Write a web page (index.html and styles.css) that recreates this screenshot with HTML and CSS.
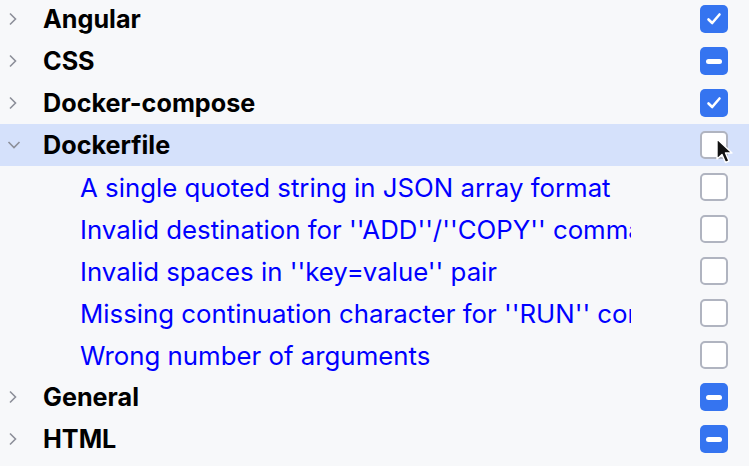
FILE: index.html
```html
<!DOCTYPE html>
<html lang="en">
<head>
  <meta charset="UTF-8">
  <title>Inspections</title>
  <link rel="stylesheet" href="styles.css">
</head>
<body>
  <div class="tree">
    <div class="row group">
      <span class="arrow"><svg width="12" height="14" viewBox="0 0 12 14"><path d="M3 1.5 L8.5 7 L3 12.5" fill="none" stroke="#8c8f99" stroke-width="1.6"/></svg></span>
      <span class="label">Angular</span>
      <span class="box checked"><svg width="18" height="18" viewBox="0 0 18 18"><path d="M3.5 9.5 L7.2 13 L14.5 4.5" fill="none" stroke="#fff" stroke-width="2.6" stroke-linecap="round" stroke-linejoin="round"/></svg></span>
    </div>
    <div class="row group">
      <span class="arrow"><svg width="12" height="14" viewBox="0 0 12 14"><path d="M3 1.5 L8.5 7 L3 12.5" fill="none" stroke="#8c8f99" stroke-width="1.6"/></svg></span>
      <span class="label">CSS</span>
      <span class="box mixed"><i class="dash"></i></span>
    </div>
    <div class="row group">
      <span class="arrow"><svg width="12" height="14" viewBox="0 0 12 14"><path d="M3 1.5 L8.5 7 L3 12.5" fill="none" stroke="#8c8f99" stroke-width="1.6"/></svg></span>
      <span class="label">Docker-compose</span>
      <span class="box checked"><svg width="18" height="18" viewBox="0 0 18 18"><path d="M3.5 9.5 L7.2 13 L14.5 4.5" fill="none" stroke="#fff" stroke-width="2.6" stroke-linecap="round" stroke-linejoin="round"/></svg></span>
    </div>
    <div class="row group hover">
      <span class="arrow"><svg width="14" height="12" viewBox="0 0 14 12"><path d="M1.5 3 L7 8.5 L12.5 3" fill="none" stroke="#8c8f99" stroke-width="1.6"/></svg></span>
      <span class="label">Dockerfile</span>
      <span class="box"></span>
      <svg class="cursor" width="22" height="30" viewBox="0 0 22 30"><path d="M2 2 L2 22 L7 17.5 L10.5 25.5 L14 24 L10.5 16 L17 16 Z" fill="#111" stroke="#fff" stroke-width="1.4" stroke-linejoin="round"/></svg>
    </div>
    <div class="row item">
      <span class="label">A single quoted string in JSON array format</span>
      <span class="box"></span>
    </div>
    <div class="row item">
      <span class="label">Invalid destination for ''ADD''/''COPY'' commands</span>
      <span class="box"></span>
    </div>
    <div class="row item">
      <span class="label">Invalid spaces in ''key=value'' pair</span>
      <span class="box"></span>
    </div>
    <div class="row item">
      <span class="label">Missing continuation character for ''RUN'' command</span>
      <span class="box"></span>
    </div>
    <div class="row item">
      <span class="label">Wrong number of arguments</span>
      <span class="box"></span>
    </div>
    <div class="row group">
      <span class="arrow"><svg width="12" height="14" viewBox="0 0 12 14"><path d="M3 1.5 L8.5 7 L3 12.5" fill="none" stroke="#8c8f99" stroke-width="1.6"/></svg></span>
      <span class="label">General</span>
      <span class="box mixed"><i class="dash"></i></span>
    </div>
    <div class="row group">
      <span class="arrow"><svg width="12" height="14" viewBox="0 0 12 14"><path d="M3 1.5 L8.5 7 L3 12.5" fill="none" stroke="#8c8f99" stroke-width="1.6"/></svg></span>
      <span class="label">HTML</span>
      <span class="box mixed"><i class="dash"></i></span>
    </div>
  </div>
</body>
</html>
```

FILE: styles.css
```css
html, body {
  margin: 0;
  background-color: #f7f8fa;
  font-family: Inter, "Noto Sans", sans-serif;
  overflow: hidden;
}

.tree {
  margin-top: -2px;
}

.row {
  position: relative;
  display: flex;
  align-items: center;
  height: 42px;
  padding-right: 21px;
}

.row.hover {
  background-color: #d5e1fb;
}

.arrow {
  width: 43px;
  display: flex;
  justify-content: flex-start;
  padding-left: 7px;
  box-sizing: border-box;
}

.group .label {
  flex: 1;
  font-size: 25.2px;
  font-weight: 700;
  color: #000;
}

.item {
  padding-left: 80px;
}

.item .label {
  flex: 1;
  font-size: 25.8px;
  color: #0000ff;
  white-space: nowrap;
  overflow: hidden;
  margin-right: 69px;
}

.box {
  width: 28px;
  height: 28px;
  box-sizing: border-box;
  border: 2px solid #b0b4c0;
  border-radius: 5px;
  background-color: #fff;
  display: flex;
  align-items: center;
  justify-content: center;
  flex-shrink: 0;
}

.box.checked,
.box.mixed {
  border: none;
  background-color: #3574f0;
}

.dash {
  width: 16px;
  height: 5px;
  border-radius: 3px;
  background-color: #fff;
}

.cursor {
  position: absolute;
  left: 715px;
  top: 13px;
}
```
